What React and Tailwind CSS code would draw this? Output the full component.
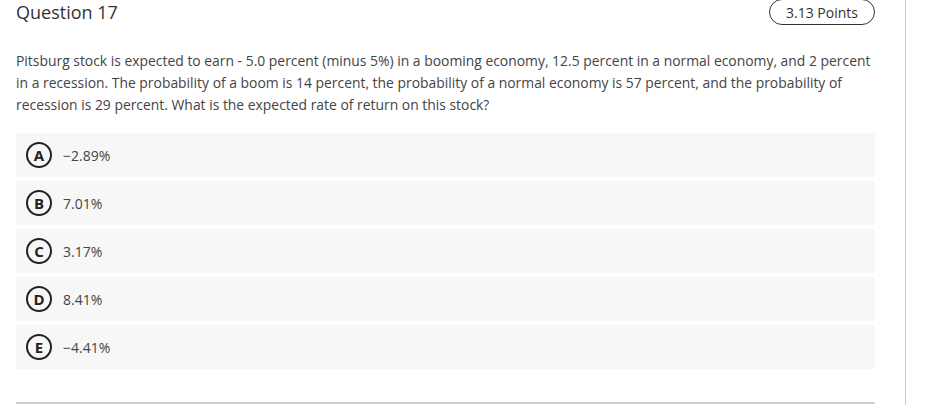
const options = [
  { letter: "A", text: "\u22122.89%" },
  { letter: "B", text: "7.01%" },
  { letter: "C", text: "3.17%" },
  { letter: "D", text: "8.41%" },
  { letter: "E", text: "\u22124.41%" },
];

export default function App() {
  return (
    <div className="w-[952px] h-[406px] overflow-hidden bg-white" style={{ fontFamily: '"Open Sans", "Liberation Sans", sans-serif' }}>
      <div className="w-[906px] h-full border-r border-[#c8c8c8] pl-4 pr-[30px]">
        <div className="flex items-center justify-between -mt-px">
          <h2 className="text-[18px] leading-6 text-[#333]">Question 17</h2>
          <div className="h-[26px] px-[16px] flex items-center rounded-full border border-[#333] text-[14px] text-[#333]">
            3.13 Points
          </div>
        </div>

        <p className="mt-[25px] text-[13.9px] leading-[22px] text-[#444]">
          Pitsburg stock is expected to earn - 5.0 percent (minus 5%) in a booming economy, 12.5 percent in a normal economy, and 2 percent in a recession. The probability of a boom is 14 percent, the probability of a normal economy is 57 percent, and the probability of recession is 29 percent. What is the expected rate of return on this stock?
        </p>

        <div className="mt-[17px] flex flex-col gap-1">
          {options.map((o) => (
            <div key={o.letter} className="h-11 flex items-center pl-[10px] bg-[#f7f7f7] rounded-[3px]">
              <span className="shrink-0 inline-flex size-[26px] items-center justify-center rounded-full border-[2px] border-[#222] text-[15px] font-bold leading-none text-[#222]">
                {o.letter}
              </span>
              <span className="ml-[11px] text-[14px] text-[#444]">{o.text}</span>
            </div>
          ))}
        </div>

        <div className="mt-[33px] border-t-2 border-[#cfcfcf]" />
      </div>
    </div>
  );
}
